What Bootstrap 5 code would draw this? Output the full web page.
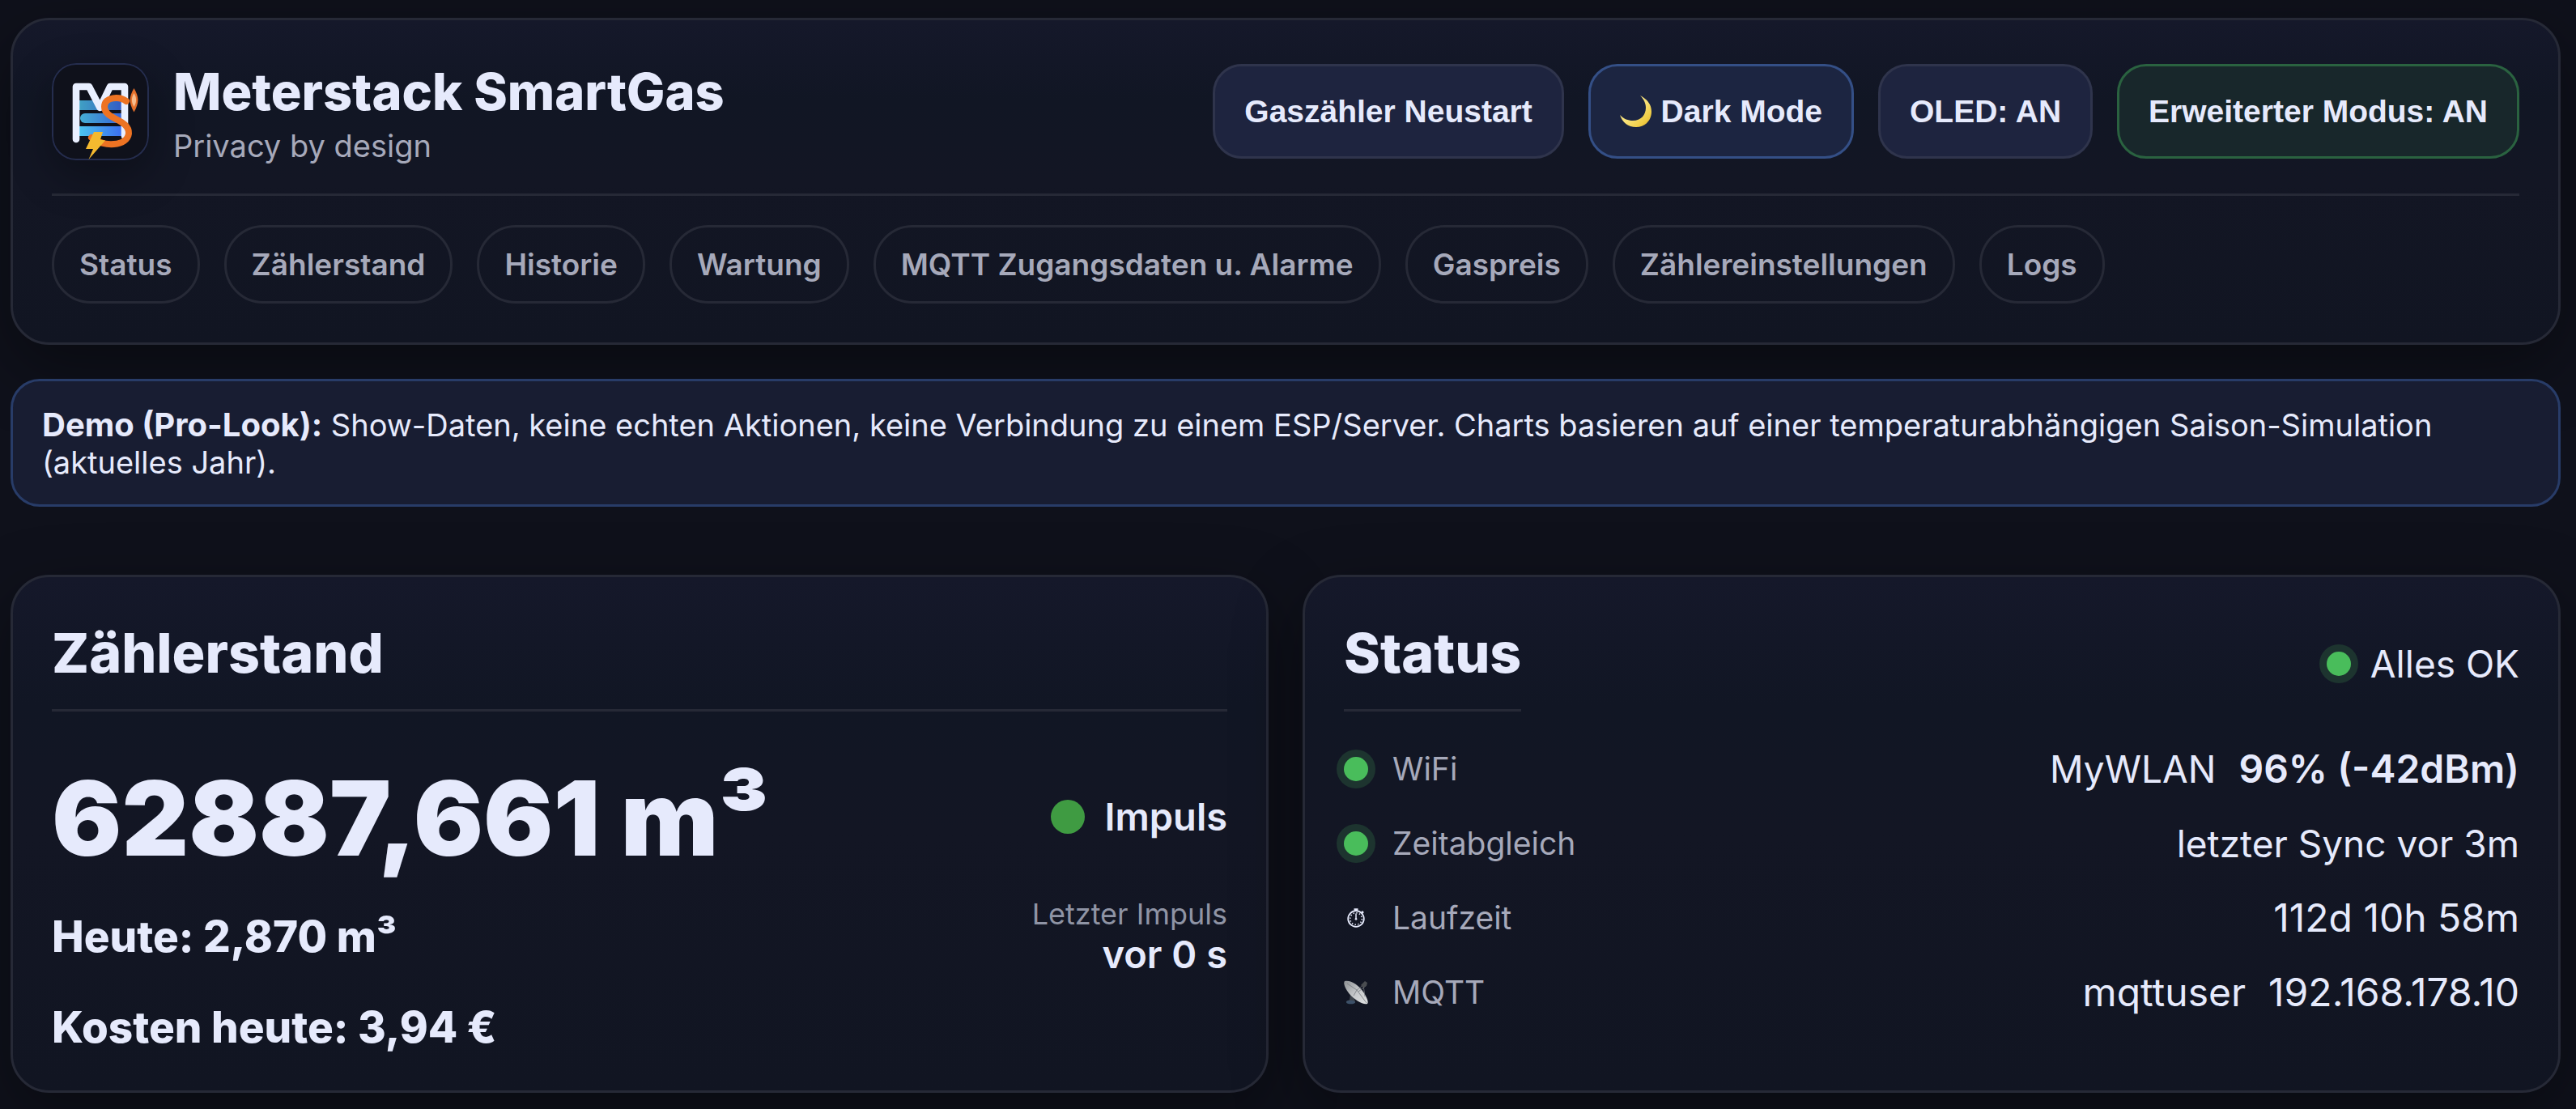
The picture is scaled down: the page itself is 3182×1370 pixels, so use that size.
<!DOCTYPE html>
<html lang="de">
<head>
<meta charset="utf-8">
<meta name="viewport" content="width=device-width, initial-scale=1">
<title>Meterstack SmartGas</title>
<link rel="stylesheet" href="https://cdn.jsdelivr.net/npm/bootstrap@5.3.0/dist/css/bootstrap.min.css">
<style>
:root{--ink:#e6eafc;--muted:#a6a9ba;--line:#262936}
body{background:#0f111b;color:var(--ink);font-family:Inter,"Noto Sans",sans-serif;font-size:46px;line-height:56px}
.page{padding:22px 19px 20px 13px}
.panel{background:linear-gradient(180deg,#15182a 0%,#111624 25%,#131624 50%,#111522 100%);border:3px solid var(--line);border-radius:48px;padding:48px;box-shadow:0 28px 84px rgba(0,0,0,.38)}
.gap-x{gap:30px}
.top-panel{padding-top:45px}
.brand-row{padding-bottom:34px;border-bottom:3px solid var(--line);margin-bottom:36px}
.logo{width:120px;height:120px;flex:none;border-radius:30px;box-shadow:0 18px 54px rgba(0,0,0,.3)}
.brand-title{font-size:63px;line-height:86px;font-weight:800;margin:0;color:var(--ink)}
.brand-sub{font-size:38px;line-height:49px;color:var(--muted)}
.act,.act:hover{font-family:"Liberation Sans",Arial,sans-serif;font-weight:700;font-size:39px;line-height:45px;color:var(--ink);padding:33px 36px;border:3px solid #2f344c;border-radius:36px;background:#1e243f}
.act-blue,.act-blue:hover{background:#1c2541;border-color:#344f86}
.act-green,.act-green:hover{background:#18272b;border-color:#2a6240}
.moon{width:40px;height:40px;vertical-align:-7px}
.tab{font-size:37px;line-height:43px;font-weight:600;color:var(--muted);text-decoration:none;padding:24px 31px;border:3px solid var(--line);border-radius:48px}
.notice{margin-top:42px;font-size:38px;line-height:46px;background:#181d32;border:3px solid #283c68;border-radius:36px;padding:31px 36px 29px}
.notice strong{font-size:40px;line-height:40px}
.cards{display:grid;grid-template-columns:1fr 1fr;gap:42px;margin-top:84px}
.head2{font-size:68px;line-height:90px;font-weight:800;margin:0;padding-bottom:25px;border-bottom:3px solid var(--line);color:var(--ink)}
.meter-body{margin-top:67px}
.meter-main{display:flex;flex-direction:column;gap:52px}
.reading{font-size:128px;line-height:129px;font-weight:900}
.sub{font-size:53px;line-height:60px;font-weight:800}
.meter-side{padding-top:35px;font-weight:600;font-size:47px}
.pulse{width:42px;height:42px;border-radius:50%;background:#3f9b42}
.pulse-row{margin-bottom:70px}
.small-label{font-size:36px;line-height:44px;font-weight:400;color:#8f94a5}
.led{width:30px;height:30px;border-radius:50%;background:#49bd5b;box-shadow:0 0 0 9px #1d342f;flex:none}
.status-list{margin:25px 0 0}
.srow{height:92px;display:flex;align-items:center;gap:30px}
.srow dt{font-size:39px;font-weight:400;color:var(--muted)}
.srow dd{margin:0 0 0 auto;display:flex;gap:28px}
.num{font-size:48px}
.ico{width:30px;height:30px;flex:none}
</style>
<script src="https://cdn.jsdelivr.net/npm/bootstrap@5.3.0/dist/js/bootstrap.bundle.min.js"></script>
</head>
<body>
<div class="page">
<header class="panel top-panel">
 <div class="brand-row d-flex justify-content-between align-items-center">
  <div class="d-flex align-items-center gap-x">
   <svg class="logo" viewBox="0 0 120 120" role="img" aria-label="Logo">
    <defs><linearGradient id="g"><stop offset="0" stop-color="#4cc4ee"/><stop offset="1" stop-color="#3b6ff0"/></linearGradient></defs>
    <rect x="1" y="1" width="118" height="118" rx="29" fill="#0f111b" stroke="#252d4e" stroke-width="2"/>
    <path d="M34 46H86V58H34Z" fill="url(#g)" opacity=".8"/><path d="M86 62H41a6 6 0 0 0 0 12H86Z" fill="url(#g)" opacity=".88"/><path d="M34 78H86V90H34Z" fill="url(#g)"/>
    <path d="M30 94V29H46L59.500 55L72 29H90V90" fill="none" stroke="#e9efff" stroke-width="8.600" stroke-linecap="round" stroke-linejoin="round"/>
    <path d="M92 47C84 41 65 41 65 54C65 70 96 69 95 87C93 103 64 104 49 92" fill="none" stroke="#ed7323" stroke-width="8" stroke-linecap="round"/>
    <path d="M52 85H63L60 94.500L66 95.500L45.500 119L51 106H42Z" fill="#f4b92f"/>
    <path d="M101.500 31C108 42 108 49 101.500 60.500C95 49 95 42 101.500 31Z" fill="#e46f2a"/><path d="M101.500 37C105 43 105 48 101.500 54C98 48 98 43 101.500 37Z" fill="#f7bd8d"/>
   </svg>
   <div><h1 class="brand-title">Meterstack SmartGas</h1><div class="brand-sub">Privacy by design</div></div>
  </div>
  <div class="d-flex gap-x">
   <button class="btn act" type="button">Gaszähler Neustart</button>
   <button class="btn act act-blue" type="button"><svg class="moon" viewBox="0 0 40 40" aria-hidden="true"><defs><linearGradient id="m" x1="0" y1="0" x2="1" y2="1"><stop offset=".5" stop-color="#f9e37a"/><stop offset=".8" stop-color="#f0cc42"/><stop offset="1" stop-color="#d9a62e"/></linearGradient></defs><path d="M25 0C34 5 39 11 39 20C39 31 31 39 20 39C10 39 3 33 0 24C5 29 10 31 16 31C26 31 32 24 32 15C32 9 29 4 25 0Z" fill="url(#m)"/></svg> Dark Mode</button>
   <button class="btn act" type="button">OLED: AN</button>
   <button class="btn act act-green" type="button">Erweiterter Modus: AN</button>
  </div>
 </div>
 <nav class="d-flex flex-wrap gap-x">
  <a class="tab" href="#status">Status</a>
  <a class="tab" href="#meter">Zählerstand</a>
  <a class="tab" href="#history">Historie</a>
  <a class="tab" href="#service">Wartung</a>
  <a class="tab" href="#mqtt">MQTT Zugangsdaten u. Alarme</a>
  <a class="tab" href="#price">Gaspreis</a>
  <a class="tab" href="#settings">Zählereinstellungen</a>
  <a class="tab" href="#logs">Logs</a>
 </nav>
</header>
<div class="notice"><strong>Demo (Pro-Look):</strong> Show-Daten, keine echten Aktionen, keine Verbindung zu einem ESP/Server. Charts basieren auf einer temperaturabhängigen Saison-Simulation (aktuelles Jahr).</div>
<main class="cards">
 <section class="panel" id="meter">
  <h2 class="head2">Zählerstand</h2>
  <div class="meter-body d-flex justify-content-between">
   <div class="meter-main">
    <div class="reading">62887,661 m³</div>
    <div class="sub">Heute: 2,870 m³</div>
    <div class="sub">Kosten heute: 3,94 €</div>
   </div>
   <div class="meter-side text-end">
    <div class="pulse-row d-flex align-items-center justify-content-end gap-4"><span class="pulse"></span>Impuls</div>
    <div class="small-label">Letzter Impuls</div>
    <div>vor 0 s</div>
   </div>
  </div>
 </section>
 <section class="panel" id="status">
  <div class="d-flex justify-content-between align-items-center">
   <h2 class="head2">Status</h2>
   <div class="d-flex align-items-center gap-4"><span class="led"></span>Alles OK</div>
  </div>
  <dl class="status-list">
   <div class="srow"><span class="led"></span><dt>WiFi</dt><dd><span>MyWLAN</span><span class="num fw-semibold">96% (-42dBm)</span></dd></div>
   <div class="srow"><span class="led"></span><dt>Zeitabgleich</dt><dd>letzter Sync vor 3m</dd></div>
   <div class="srow">
    <svg class="ico" viewBox="0 0 30 30" fill="none" stroke="#e6eafc" aria-hidden="true"><circle cx="15" cy="16" r="9.800" stroke-width="1.800"/><circle cx="15" cy="16" r="7.300" stroke-width="1.600" stroke-dasharray="1.400 2.422"/><path d="M12.500 4.500H17.500M15 4V7M22 7L24 9" stroke-width="2.600"/><path d="M15 9.500V16" stroke-width="1.500"/><circle cx="15" cy="16.300" r="1" fill="#e6eafc"/></svg>
    <dt>Laufzeit</dt><dd class="num">112d 10h 58m</dd></div>
   <div class="srow">
    <svg class="ico" viewBox="0 0 30 30" aria-hidden="true"><defs><linearGradient id="d" x1="0" y1="0" x2="1" y2="1"><stop offset="0" stop-color="#8d9093"/><stop offset=".5" stop-color="#c6c8ca"/><stop offset="1" stop-color="#e0e2e3"/></linearGradient></defs><path d="M8 17L13 22L14 28H4L3 26L7 24Z" fill="#3d434b"/><ellipse cx="8.500" cy="27" rx="5.500" ry="2.300" fill="#3c5068"/><path d="M1 1C8-1 18 6 23 13C28 20 31 27 29 29C24 31 13 24 7 17C1 10-1 3 1 1Z" fill="url(#d)"/><path d="M4 4L16 12L28 28M16 12L12 19M16 12L24 6M18 14L27 7M24 6L26 20" stroke="#777b80" stroke-width=".8" fill="none"/><path d="M21 6L26 1L29 3L28 7L24 9Z" fill="#4a4d51"/></svg>
    <dt>MQTT</dt><dd class="num"><span>mqttuser</span><span>192.168.178.10</span></dd></div>
  </dl>
 </section>
</main>
</div>
</body>
</html>
